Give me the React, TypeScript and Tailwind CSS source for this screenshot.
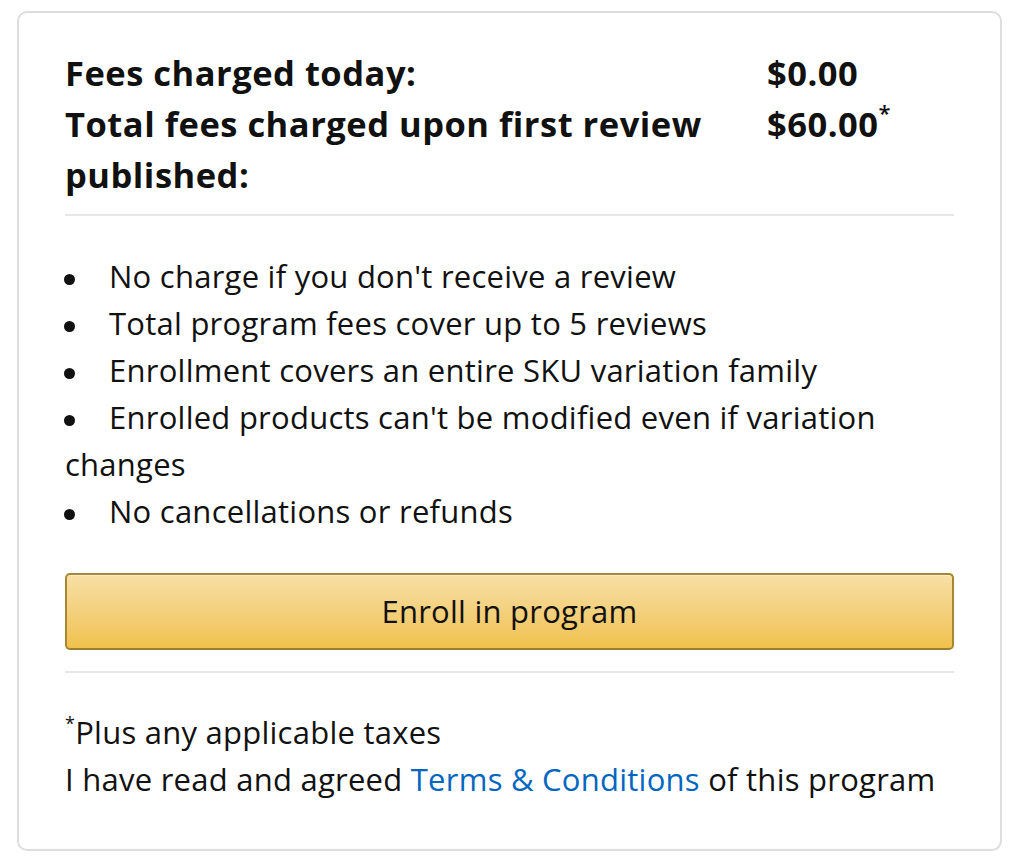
import React from "react";

const font = { fontFamily: '"Open Sans", "Noto Sans", Arial, sans-serif' };

export default function App() {
  const bullets: string[] = [
    "No charge if you don't receive a review",
    "Total program fees cover up to 5 reviews",
    "Enrollment covers an entire SKU variation family",
    "Enrolled products can't be modified even if variation changes",
    "No cancellations or refunds",
  ];
  return (
    <div className="bg-white w-[1018px] h-[863px] pt-[11px] pl-[17px]" style={font}>
      <div className="w-[985px] border-2 border-[#dddddd] rounded-[10px] pt-[34px] pb-[46px] px-[46px] text-[#111111]">
        <div className="grid grid-cols-[702px_1fr] font-bold text-[34.5px] leading-[51px] tracking-[0.5px]">
          <div>Fees charged today:</div>
          <div>$0.00</div>
          <div className="pr-[20px]">Total fees charged upon first review published:</div>
          <div>
            $60.00<span className="text-[22px] leading-none font-semibold relative top-[-16px]">*</span>
          </div>
        </div>
        <div className="mt-[14px] h-[2px] bg-[#e7e7e7]" />
        <ul className="mt-[37px] text-[31px] leading-[47px] tracking-[0.25px]">
          {bullets.map((b) => (
            <li key={b}>
              <span className="inline-block w-[11px] h-[11px] rounded-full bg-[#111111] mr-[34px] ml-[-1px] align-[3px]" />
              {b}
            </li>
          ))}
        </ul>
        <button
          className="mt-[38px] w-full h-[77px] rounded-[5px] border-2 border-[#a88734] border-b-[#9c7e31] bg-gradient-to-b from-[#f7dfa5] to-[#f0c14b] text-[31px] tracking-[0.25px] text-[#111111] shadow-[inset_0_1px_0_rgba(255,255,255,0.4)]"
          style={font}
        >
          Enroll in program
        </button>
        <div className="mt-[21px] h-[2px] bg-[#e7e7e7]" />
        <div className="mt-[36px] text-[31px] leading-[47px] tracking-[0.25px]">
          <div>
            <span className="text-[18px] leading-none relative top-[-14px]">*</span>Plus any applicable taxes
          </div>
          <div>
            I have read and agreed <a className="text-[#0066c0]">Terms &amp; Conditions</a> of this program
          </div>
        </div>
      </div>
    </div>
  );
}
